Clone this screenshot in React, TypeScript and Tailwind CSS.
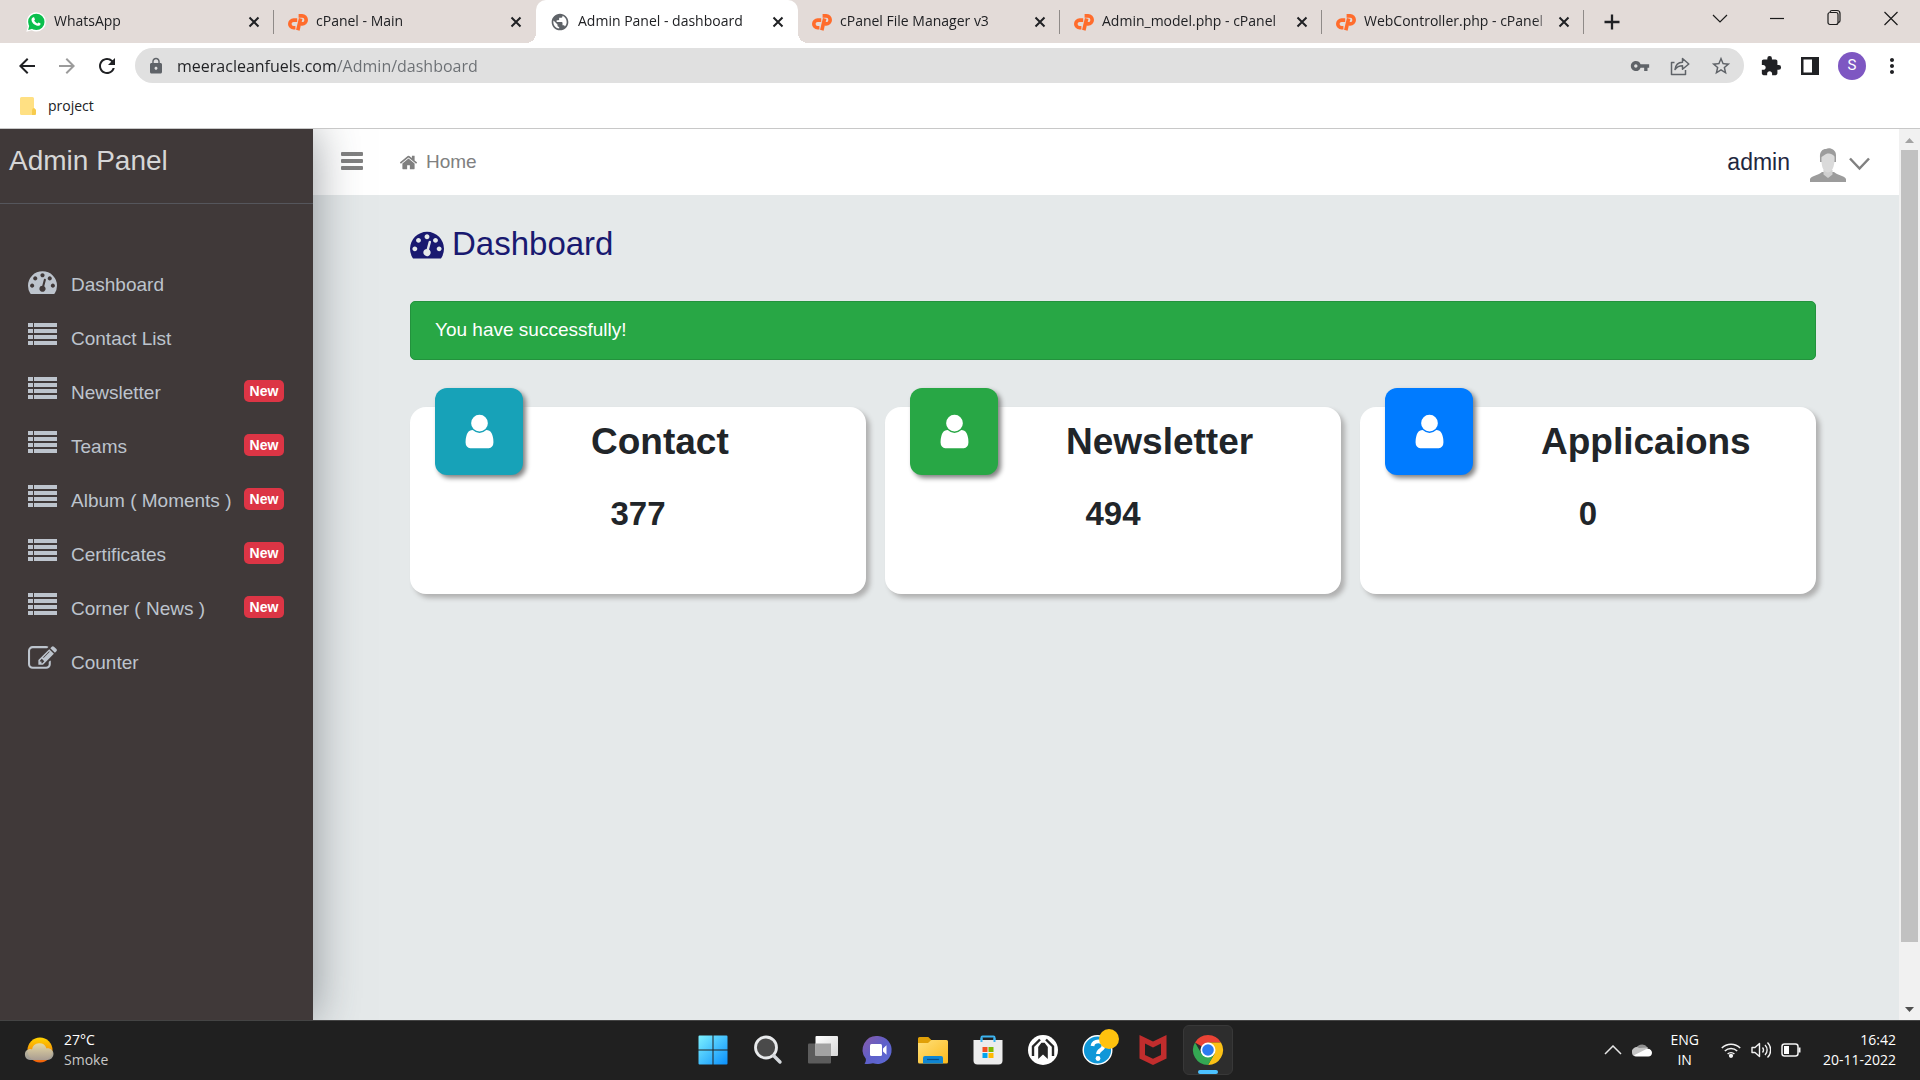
import type { ReactNode } from "react";
import {
  MdArrowBack,
  MdArrowForward,
  MdExtension,
  MdLock,
  MdMoreVert,
  MdPublic,
  MdRefresh,
  MdStarBorder,
  MdVpnKey,
} from "react-icons/md";

const TACHOMETER =
  "M384 1152q0-53-37.5-90.5t-90.5-37.5-90.5 37.5-37.5 90.5 37.5 90.5 90.5 37.5 90.5-37.5 37.5-90.5zm192-448q0-53-37.5-90.5t-90.5-37.5-90.5 37.5-37.5 90.5 37.5 90.5 90.5 37.5 90.5-37.5 37.5-90.5zm428 481l101-382q6-26-7.5-48.5t-38.5-29.5-48 6.5-30 39.5l-101 382q-60 5-107 43.5t-63 98.5q-20 77 20 146t117 89 146-20 89-117q16-60-6-117t-72-91zm660-33q0-53-37.5-90.5t-90.5-37.5-90.5 37.5-37.5 90.5 37.5 90.5 90.5 37.5 90.5-37.5 37.5-90.5zm-640-640q0-53-37.5-90.5t-90.5-37.5-90.5 37.5-37.5 90.5 37.5 90.5 90.5 37.5 90.5-37.5 37.5-90.5zm448 192q0-53-37.5-90.5t-90.5-37.5-90.5 37.5-37.5 90.5 37.5 90.5 90.5 37.5 90.5-37.5 37.5-90.5zm320 448q0 261-141 483-19 29-54 29h-1402q-35 0-54-29-141-221-141-483 0-182 71-348t191-286 286-191 348-71 348 71 286 191 191 286 71 348z";
const PENCIL =
  "M888 1184l116-116-152-152-116 116v56h96v96h56zm440-720q-16-16-33 1l-350 350q-17 17-1 33t33-1l350-350q17-17 1-33zm80 594v190q0 119-84.5 203.5t-203.5 84.5h-832q-119 0-203.5-84.5t-84.5-203.5v-832q0-119 84.5-203.5t203.5-84.5h832q63 0 117 25 15 7 18 23 3 17-9 29l-49 49q-14 14-32 8-23-6-45-6h-832q-66 0-113 47t-47 113v832q0 66 47 113t113 47h832q66 0 113-47t47-113v-126q0-13 9-22l64-64q15-15 35-7t20 29zm-96-738l288 288-672 672h-288v-288zm444 132l-92 92-288-288 92-92q28-28 68-28t68 28l152 152q28 28 28 68t-28 68z";
const USER =
  "M1536 1399q0 109-62.5 187t-150.5 78h-854q-88 0-150.5-78t-62.5-187q0-85 8.5-160.5t31.5-152 58.5-131 94-89 134.5-34.5q131 128 313 128t313-128q76 0 134.5 34.5t94 89 58.5 131 31.5 152 8.5 160.5zm-256-887q0 159-112.5 271.5t-271.5 112.5-271.5-112.5-112.5-271.5 112.5-271.5 271.5-112.5 271.5 112.5 112.5 271.5z";
const HOME =
  "M1472 992v480q0 26-19 45t-45 19h-384v-384h-256v384h-384q-26 0-45-19t-19-45v-480q0-1 .5-3t.5-3l575-474 575 474q1 2 1 6zm223-69l-62 74q-8 9-21 11h-3q-13 0-21-7l-692-577-692 577q-12 8-24 7-13-2-21-11l-62-74q-8-10-7-23.5t11-21.5l719-599q32-26 76-26t76 26l244 204v-195q0-14 9-23t23-9h192q14 0 23 9t9 23v408l219 182q10 8 11 21.5t-7 23.5z";

function Glyph({ d, className }: { d: string; className: string }) {
  return (
    <svg viewBox="0 0 1792 1792" fill="currentColor" className={className} aria-hidden="true">
      <path d={d} />
    </svg>
  );
}

function ListGlyph({ className }: { className: string }) {
  return (
    <svg viewBox="0 0 29 29" fill="currentColor" className={className} aria-hidden="true">
      {[3, 9, 15, 21].map((y) => (
        <g key={y}>
          <rect x="0" y={y} width="5" height="4" />
          <rect x="6" y={y} width="23" height="4" />
        </g>
      ))}
    </svg>
  );
}

function CloseMark() {
  return (
    <svg viewBox="0 0 12 12" className="size-3" stroke="#202124" strokeWidth="2" aria-hidden="true">
      <path d="M1.5 1.5l9 9M10.5 1.5l-9 9" />
    </svg>
  );
}

function WhatsAppMark() {
  return (
    <svg viewBox="0 0 20 20" className="size-5" aria-hidden="true">
      <path d="M10.3 .3a9.6 9.6 0 0 1 0 19.2c-1.7 0-3.2-.4-4.5-1.2L.3 19.8l1.5-5.3A9.6 9.6 0 0 1 10.3.3z" fill="#fff" />
      <circle cx="10.3" cy="9.9" r="8.2" fill="#0abf4c" />
      <path d="M2.2 17.9l1.1-4.5 3.2 3.3z" fill="#0abf4c" />
      <path
        d="M7.200 5.300c.3-.2.900-.1 1 .2l.7 1.700c.1.300 0 .5-.7 1.300.8 1.500 1.800 2.400 3.300 3 .3-.3.700-1 1-1 .5.200 1.900.7 2 1 .2.700-.3 1.900-1.400 2.200-1 .4-2.700.1-4.600-1.200-1.500-1-3-3-3-4.600 0-1.200.7-2.100 1.700-2.600z"
        fill="#fff"
      />
    </svg>
  );
}

function CpanelMark() {
  return (
    <svg viewBox="0 0 20 18" className="h-[18px] w-5" fill="none" stroke="#ff6c2c" strokeWidth="3.6" strokeLinejoin="round" aria-hidden="true">
      <path d="M9.200 7.100H5.600a3.800 3.800 0 0 0 0 7.600H7.400" />
      <path d="M9.800 17.200L12.700 5.500" />
      <path d="M10.600 2.900H14.200a4 4 0 0 1 0 8H12.600" />
    </svg>
  );
}

type Tab = { title: string; icon: ReactNode; active?: boolean; divider?: boolean };

const tabs: Tab[] = [
  { title: "WhatsApp", icon: <WhatsAppMark />, divider: true },
  { title: "cPanel - Main", icon: <CpanelMark /> },
  { title: "Admin Panel - dashboard", icon: <MdPublic className="size-5 text-[#5f6368]" />, active: true },
  { title: "cPanel File Manager v3", icon: <CpanelMark />, divider: true },
  { title: "Admin_model.php - cPanel", icon: <CpanelMark />, divider: true },
  { title: "WebController.php - cPanel", icon: <CpanelMark />, divider: true },
];

function BrowserTab({ tab }: { tab: Tab }) {
  return (
    <div
      className={
        tab.active
          ? "relative flex h-full min-w-0 basis-[262px] items-center rounded-t-[10px] bg-white px-3.5"
          : "relative flex h-full min-w-0 basis-[262px] items-center px-3.5"
      }
    >
      {tab.active && (
        <>
          <span className="absolute bottom-0 -left-2.5 size-2.5 bg-[radial-gradient(circle_at_0_0,transparent_10px,#fff_10px)]" />
          <span className="absolute -right-2.5 bottom-0 size-2.5 bg-[radial-gradient(circle_at_100%_0,transparent_10px,#fff_10px)]" />
        </>
      )}
      <button type="button" className="flex min-w-0 flex-1 items-center gap-2 text-left">
        <span className="shrink-0">{tab.icon}</span>
        <span className="mb-0.5 flex-1 overflow-hidden text-sm whitespace-nowrap text-[#202124] [mask-image:linear-gradient(90deg,#000_92%,transparent)]">
          {tab.title}
        </span>
      </button>
      <button type="button" aria-label={"Close " + tab.title} className="ml-2 shrink-0">
        <CloseMark />
      </button>
      {tab.divider && <span className="absolute top-2.5 right-0 h-6 w-px bg-[#8f8a88]" />}
    </div>
  );
}

function BrowserChrome() {
  return (
    <header className="shrink-0 border-b border-[#c8c8c8] bg-white">
      <div className="flex h-[43px] items-center bg-[#e3dbd8] pr-px pl-3">
        {tabs.map((t) => (
          <BrowserTab key={t.title} tab={t} />
        ))}
        <button type="button" aria-label="New tab" className="ml-5 shrink-0">
          <svg viewBox="0 0 16 16" className="size-4" stroke="#202124" strokeWidth="2.3" aria-hidden="true">
            <path d="M8 .5v15M.5 8h15" />
          </svg>
        </button>
        <div className="mb-1.5 ml-auto flex shrink-0 text-[#1b1b1b]">
          {[
            ["Search tabs", "M3 6l7 7 7-7"],
            ["Minimize", "M3 9.500h14"],
            ["Restore", "M4 5.500a2 2 0 0 1 2-2h6a2 2 0 0 1 2 2v8a2 2 0 0 1-2 2H6a2 2 0 0 1-2-2zM6 3a2 2 0 0 1 2-1.500h5a3 3 0 0 1 3 3v7a2 2 0 0 1-1.500 2"],
            ["Close", "M3.500 3l13 13M16.500 3l-13 13"],
          ].map(([label, d]) => (
            <button key={label} type="button" aria-label={label} className="flex w-[57px] justify-center">
              <svg viewBox="0 0 20 20" className="size-5" fill="none" stroke="currentColor" strokeWidth="1.2" aria-hidden="true">
                <path d={d} />
              </svg>
            </button>
          ))}
        </div>
      </div>

      <div className="flex h-[45px] items-center pr-4 pl-[15px] text-[#202124]">
        <button type="button" aria-label="Back"><MdArrowBack className="size-6" /></button>
        <button type="button" aria-label="Forward" className="ml-4 text-[#9b9b9b]"><MdArrowForward className="size-6" /></button>
        <button type="button" aria-label="Reload" className="ml-4"><MdRefresh className="size-6" /></button>
        <div className="ml-4 flex h-[35px] flex-1 items-center rounded-full bg-[#e0e0e0] px-3 text-[#5f6368]">
          <MdLock className="size-[18px]" aria-hidden="true" />
          <input
            type="text"
            aria-label="Address"
            defaultValue="meeracleanfuels.com/Admin/dashboard"
            className="ml-3 min-w-0 flex-1 bg-[linear-gradient(90deg,#202124_159px,#6b6f73_159px)] bg-clip-text text-base leading-6 text-transparent outline-none"
          />
          <div className="flex items-center gap-5">
            <button type="button" aria-label="Passwords"><MdVpnKey className="size-5" /></button>
            <button type="button" aria-label="Share">
              <svg viewBox="0 0 20 20" className="size-5" fill="none" stroke="currentColor" strokeWidth="1.5" aria-hidden="true">
                <path d="M4.500 6.500H1.500v12h14v-4.500M5 13.500c.6-4.500 3-7 7.500-7.200V2.500L18.800 8l-6.300 5.300V9.700C9 9.700 7 10.700 5 13.500z" strokeLinejoin="round" />
              </svg>
            </button>
            <button type="button" aria-label="Bookmark this page"><MdStarBorder className="size-[22px]" /></button>
          </div>
        </div>
        <div className="ml-4 flex items-center gap-[18px]">
          <button type="button" aria-label="Extensions"><MdExtension className="size-[22px]" /></button>
          <button type="button" aria-label="Side panel">
            <svg viewBox="0 0 18 18" className="mx-px size-[18px]" aria-hidden="true">
              <path d="M0 0h18v18H0zM2.500 2.500v13H11v-13z" fill="currentColor" fillRule="evenodd" />
            </svg>
          </button>
          <button type="button" aria-label="Profile" className="flex size-7 items-center justify-center rounded-full bg-[#7e57c2] font-['Roboto',sans-serif] text-[15px] text-white">
            S
          </button>
          <button type="button" aria-label="Menu" className="-ml-1"><MdMoreVert className="size-6" /></button>
        </div>
      </div>

      <div className="flex h-10 items-center pb-1 pl-5">
        <button type="button" className="flex items-center gap-3 text-sm text-[#202124]">
          <svg viewBox="0 0 16 18" className="h-[18px] w-4" aria-hidden="true">
            <path d="M1.500 0h11A1.500 1.500 0 0 1 14 1.500V11l2 2v3.500a1.500 1.500 0 0 1-1.500 1.500h-13A1.500 1.500 0 0 1 0 16.500v-15A1.500 1.500 0 0 1 1.500 0z" fill="#ffe083" />
            <path d="M14 11l2 2v3.500a1.500 1.500 0 0 1-1.500 1.500H12v-4.500a2.500 2.500 0 0 1 2-2.500z" fill="#f7cb4d" />
          </svg>
          project
        </button>
      </div>
    </header>
  );
}

const menu = [
  { label: "Dashboard", icon: "tach", badge: false },
  { label: "Contact List", icon: "list", badge: false },
  { label: "Newsletter", icon: "list", badge: true },
  { label: "Teams", icon: "list", badge: true },
  { label: "Album ( Moments )", icon: "list", badge: true },
  { label: "Certificates", icon: "list", badge: true },
  { label: "Corner ( News )", icon: "list", badge: true },
  { label: "Counter", icon: "pencil", badge: false },
];

function Sidebar() {
  return (
    <aside className="relative z-10 w-[313px] shrink-0 bg-[#403939] shadow-[0_0_44px_rgba(49,57,66,0.5)]">
      <div className="h-[75px] border-b border-[#55565c] pt-3.5 pl-[9px]">
        <a href="#" className="text-[28px] leading-9 text-[#d6d6d6]">Admin Panel</a>
      </div>
      <nav className="pt-[54px]">
        <ul>
          {menu.map((m) => (
            <li key={m.label}>
              <a href="#" className="flex h-[54px] items-center pr-[29px] pl-7 text-[19px] text-[#bdc4cd]">
                {m.icon === "list" && <ListGlyph className="mb-2.5 size-[29px]" />}
                {m.icon === "tach" && <Glyph d={TACHOMETER} className="mb-2 size-[29px]" />}
                {m.icon === "pencil" && <Glyph d={PENCIL} className="mb-2.5 size-[29px]" />}
                <span className="ml-3.5 flex-1 whitespace-nowrap">{m.label}</span>
                {m.badge && (
                  <span className="mb-1 flex h-[22px] w-10 items-center justify-center rounded-[5px] bg-[#dc3545] text-sm font-bold text-white">
                    New
                  </span>
                )}
              </a>
            </li>
          ))}
        </ul>
      </nav>
    </aside>
  );
}

function TopBar() {
  return (
    <div className="flex h-[66px] items-center bg-white pr-[29px] pl-7 text-[#808080]">
      <button type="button" aria-label="Toggle menu" className="mb-0.5">
        <svg viewBox="0 0 22 18" className="h-[18px] w-[22px]" fill="currentColor" aria-hidden="true">
          <rect width="22" height="4" rx="1" />
          <rect y="7" width="22" height="4" rx="1" />
          <rect y="14" width="22" height="4" rx="1" />
        </svg>
      </button>
      <a href="#" className="ml-9 flex items-center gap-2 text-[19px]">
        <Glyph d={HOME} className="size-[19px]" />
        Home
      </a>
      <button type="button" className="ml-auto flex items-center text-[23px] text-[#1f2740]">
        admin
        <svg viewBox="0 0 36 34" className="mt-1.5 ml-5 h-[34px] w-9" aria-hidden="true">
          <path d="M0 34v-3c1-3 9-4 12-7h12c3 3 11 4 12 7v3z" fill="#9c9c9c" />
          <path d="M13.500 22h9v4.500L18 30l-4.500-3.500z" fill="#d0d0d0" />
          <path d="M10 10C9.500 4 12 1 16 1c3-2 10 0 10 6v7H10z" fill="#9c9c9c" />
          <path d="M11.500 9c2-1 4-3.500 6-3.500S23 6 24.500 8.500c.5 6-1 16-6.500 16S11 16 11.500 9z" fill="#dadada" />
        </svg>
        <svg viewBox="0 0 21 14" className="mt-1 ml-[3px] h-3.5 w-[21px]" fill="none" stroke="#808080" strokeWidth="2.5" aria-hidden="true">
          <path d="M1 1.500l9.500 10 9.500-10" />
        </svg>
      </button>
    </div>
  );
}

function StatCard({ title, value, tile }: { title: string; value: number; tile: string }) {
  return (
    <section className="relative h-[187px] flex-1 rounded-2xl bg-white shadow-[4px_4px_5px_#b0b0b0]">
      <div className={tile}>
        <Glyph d={USER} className="size-[39px]" />
      </div>
      <h3 className="pt-3 pl-[181px] text-[37px] leading-[45px] font-bold">{title}</h3>
      <p className="pt-[30px] text-center text-[33px] leading-10 font-bold">{value}</p>
    </section>
  );
}

function Content() {
  return (
    <main className="flex-1 pt-[29px] pr-[83px] pl-[97px] text-[#212529]">
      <h1 className="flex items-center gap-2 text-[33px] leading-10 text-[#191970]">
        <Glyph d={TACHOMETER} className="size-[34px]" />
        Dashboard
      </h1>
      <div role="alert" className="mt-[37px] h-[59px] rounded-[5px] border border-[#23923d] bg-[#28a745] px-6 pt-3.5 text-[19px] leading-7 text-white">
        You have successfully!
      </div>
      <div className="mt-[47px] flex gap-[19px]">
        <StatCard title="Contact" value={377} tile="absolute -top-[19px] left-[25px] flex h-[87px] w-[88px] items-center justify-center rounded-xl bg-[#17a2b8] text-white shadow-[3px_3px_5px_#808080]" />
        <StatCard title="Newsletter" value={494} tile="absolute -top-[19px] left-[25px] flex h-[87px] w-[88px] items-center justify-center rounded-xl bg-[#28a745] text-white shadow-[3px_3px_5px_#808080]" />
        <StatCard title="Applicaions" value={0} tile="absolute -top-[19px] left-[25px] flex h-[87px] w-[88px] items-center justify-center rounded-xl bg-[#007bff] text-white shadow-[3px_3px_5px_#808080]" />
      </div>
    </main>
  );
}

function ScrollBar() {
  return (
    <div className="flex w-[21px] shrink-0 flex-col items-center bg-[#f1f1f1]" aria-hidden="true">
      <svg viewBox="0 0 21 21" className="size-[21px]"><path d="M6 14l4.500-5 4.500 5z" fill="#a3a3a3" /></svg>
      <div className="w-[17px] basis-[792px] bg-[#c1c1c1]" />
      <svg viewBox="0 0 21 21" className="mt-auto size-[21px]"><path d="M6 8l4.500 5L15 8z" fill="#505050" /></svg>
    </div>
  );
}

const apps: { name: string; art: ReactNode; active?: boolean }[] = [
  {
    name: "Start",
    art: (
      <>
        <defs>
          <linearGradient id="win" x1="0" y1="0" x2="1" y2="1">
            <stop offset="0" stopColor="#7df1ff" />
            <stop offset="1" stopColor="#0a8ffb" />
          </linearGradient>
        </defs>
        <path d="M1.500 .5H14.500v14H.5v-13a1 1 0 0 1 1-1zM15.500 .5h13a1 1 0 0 1 1 1v13h-14zM.5 15.500h14v14h-13a1 1 0 0 1-1-1zM15.500 15.500h14v13a1 1 0 0 1-1 1h-13z" fill="url(#win)" />
      </>
    ),
  },
  {
    name: "Search",
    art: (
      <>
        <circle cx="13" cy="12.500" r="10.500" fill="#4a4a4a" stroke="#e8eaec" strokeWidth="2.8" />
        <path d="M20.500 20.500l6.500 6.500" stroke="#d4d8dc" strokeWidth="3.4" strokeLinecap="round" />
      </>
    ),
  },
  {
    name: "Task view",
    art: (
      <>
        <defs>
          <linearGradient id="tv" x1="0" y1="0" x2="1" y2="1">
            <stop offset="0" stopColor="#fff" />
            <stop offset="1" stopColor="#d8d8d8" />
          </linearGradient>
        </defs>
        <rect x="0" y="8.500" width="23" height="20" rx="1" fill="#5c5c5c" />
        <rect x="7.500" y="1" width="22.500" height="20" rx="1" fill="url(#tv)" />
        <rect x="7.500" y="8.500" width="15.500" height="12.500" fill="#a3a3a3" />
      </>
    ),
  },
  {
    name: "Chat",
    art: (
      <>
        <defs>
          <linearGradient id="chat" x1="0" y1="0" x2="1" y2="1">
            <stop offset="0" stopColor="#8a5ba8" />
            <stop offset=".5" stopColor="#5f5fc9" />
            <stop offset="1" stopColor="#5b6bd6" />
          </linearGradient>
        </defs>
        <path d="M15 1a14 14 0 1 1-5 27.200c-2.500.8-5.500 1-8.500.6 1.300-1.800 1.600-3.300 1.300-5A14 14 0 0 1 15 1z" fill="url(#chat)" />
        <rect x="7" y="9" width="12" height="12" rx="1.500" fill="#fff" />
        <path d="M20 13.500l3.500-3.200v9.400L20 16.500z" fill="#fff" />
      </>
    ),
  },
  {
    name: "File Explorer",
    art: (
      <>
        <defs>
          <linearGradient id="fold" x1="0" y1="0" x2="1" y2="1">
            <stop offset="0" stopColor="#ffe07a" />
            <stop offset="1" stopColor="#fbb91c" />
          </linearGradient>
        </defs>
        <path d="M0 3.500A1.500 1.500 0 0 1 1.500 2h8.800l3 3H13v6H0z" fill="#e0a008" />
        <path d="M0 8h10l3.300-3H28.500A1.500 1.500 0 0 1 30 6.500V27a1.500 1.500 0 0 1-1.500 1.500h-27A1.500 1.500 0 0 1 0 27z" fill="url(#fold)" />
        <path d="M5 28.500V23a2 2 0 0 1 2-2h16a2 2 0 0 1 2 2v5.500z" fill="#0f86d3" />
        <path d="M9 24.500h12" stroke="#0a4e86" strokeWidth="1.2" />
      </>
    ),
  },
  {
    name: "Microsoft Store",
    art: (
      <>
        <path d="M8.500 8V2.500a1 1 0 0 1 1-1h11a1 1 0 0 1 1 1V8" fill="none" stroke="#3cb4f0" strokeWidth="2" />
        <path d="M.5 5h29v20.500a4 4 0 0 1-4 4h-21a4 4 0 0 1-4-4z" fill="#ececec" />
        <path d="M8.500 7V3M21.500 7V3" stroke="#3cb4f0" strokeWidth="2" />
        <rect x="9.500" y="12" width="5" height="5" fill="#f25022" />
        <rect x="15.500" y="12" width="5" height="5" fill="#7fba00" />
        <rect x="9.500" y="18" width="5" height="5" fill="#00a4ef" />
        <rect x="15.500" y="18" width="5" height="5" fill="#ffb900" />
      </>
    ),
  },
  {
    name: "Assistant",
    art: (
      <>
        <circle cx="15" cy="15" r="15" fill="#fff" />
        <path d="M10.200 24V12l3.200-4.200h3.200L19.800 12v12L15 19.500z" fill="#262626" />
        <path d="M5 21v-9.500L12 4.500M25 21v-9.500L18 4.500" fill="none" stroke="#262626" strokeWidth="2.4" />
      </>
    ),
  },
  {
    name: "Help",
    art: (
      <>
        <circle cx="14.500" cy="15" r="14.300" fill="#0f97d8" stroke="#fff" strokeWidth="1.4" />
        <path d="M9.500 11c.5-6 11-6 11-.2 0 4.200-5.500 3.700-5.500 8.200" fill="none" stroke="#fff" strokeWidth="3.8" />
        <circle cx="15" cy="23.500" r="2.400" fill="#fff" />
        <circle cx="26" cy="4" r="10" fill="#ffc20e" />
      </>
    ),
  },
  {
    name: "McAfee",
    art: <path d="M1.500 0L15 6.500 28.500 0v23.500L15 30 1.500 23.500zM7 8.500v11.500l8 3.800 8-3.800V8.500l-8 4z" fill="#c12d2d" fillRule="evenodd" />,
  },
  {
    name: "Google Chrome",
    active: true,
    art: (
      <>
        <path d="M15 15L2 7.500A15 15 0 0 1 28 7.500H15z" fill="#ea4335" />
        <path d="M15 7.500h13A15 15 0 0 1 15 30l6.500-11.200z" fill="#fbc116" />
        <path d="M2 7.500A15 15 0 0 0 15 30l6.500-11.200-13 0z" fill="#34a853" />
        <circle cx="15" cy="15" r="7.500" fill="#fff" />
        <circle cx="15" cy="15" r="5.800" fill="#2b7bf0" />
      </>
    ),
  },
];

function TaskBar() {
  return (
    <footer className="grid h-[60px] shrink-0 grid-cols-[1fr_auto_1fr] items-center border-t border-[#444] bg-[#202020] pb-0.5 text-sm leading-5 text-white">
      <button type="button" className="flex items-center gap-2.5 justify-self-start pl-6 text-left">
        <svg viewBox="0 0 30 28" className="h-7 w-[30px]" aria-hidden="true">
          <defs>
            <linearGradient id="sun" x1="0" y1="0" x2="0" y2="1">
              <stop offset="0" stopColor="#ffd400" />
              <stop offset="1" stopColor="#f2600c" />
            </linearGradient>
            <linearGradient id="haze" x1="0" y1="0" x2="0" y2="1">
              <stop offset="0" stopColor="#e6dcae" />
              <stop offset="1" stopColor="#a3a09c" />
            </linearGradient>
          </defs>
          <circle cx="16" cy="14" r="12.500" fill="url(#sun)" />
          <path d="M6 24a5.500 5.500 0 0 1-1-10.800c1-.3 2-.2 3 .2a7.500 7.500 0 0 1 14.500-1c4-.5 7 2.300 7 5.600a6 6 0 0 1-6 6z" fill="url(#haze)" opacity=".93" />
        </svg>
        <span>
          27°C
          <br />
          <span className="text-[#c8c8c8]">Smoke</span>
        </span>
      </button>

      <div className="flex gap-[5px]">
        {apps.map((a) => (
          <button
            key={a.name}
            type="button"
            aria-label={a.name}
            className={
              a.active
                ? "relative flex size-[50px] items-center justify-center rounded-md border border-[#383838] bg-[#2d2d2d]"
                : "relative flex size-[50px] items-center justify-center"
            }
          >
            <svg viewBox="0 0 30 30" className="size-[30px] overflow-visible" aria-hidden="true">
              {a.art}
            </svg>
            {a.active && <span className="absolute bottom-0 h-1 w-5 rounded-full bg-[#4cc2ff]" />}
          </button>
        ))}
      </div>

      <div className="flex items-center justify-self-end pr-6">
        <button type="button" aria-label="Show hidden icons">
          <svg viewBox="0 0 18 10" className="h-2.5 w-[18px]" fill="none" stroke="#e6e6e6" strokeWidth="1.5" aria-hidden="true">
            <path d="M1 9l8-8 8 8" />
          </svg>
        </button>
        <svg viewBox="0 0 20 14" className="ml-2.5 h-3.5 w-5" aria-hidden="true">
          <path d="M3.500 8a6.500 6.500 0 0 1 12-3.500L9 9z" fill="#8f8f8f" />
          <path d="M0 9.500A4.500 4.500 0 0 1 7 5l9-.5c.5 1-5 5-12.500 9A4 4 0 0 1 0 9.500z" fill="#c4c4c4" />
          <path d="M2 12.300L14.500 6c3-.8 5.500 1.300 5.500 3.800A3.800 3.800 0 0 1 16.200 13.500H4.500c-1 0-2-.5-2.500-1.200z" fill="#fff" />
        </svg>
        <button type="button" className="ml-[18px] text-center">
          ENG
          <br />
          IN
        </button>
        <button type="button" aria-label="Network, volume and battery" className="ml-[22px] flex items-center gap-2.5">
          <svg viewBox="0 0 20 16" className="h-4 w-5" fill="none" stroke="#f2f2f2" strokeWidth="1.5" aria-hidden="true">
            <path d="M.8 6a13 13 0 0 1 18.400 0M3.800 9a9 9 0 0 1 12.400 0M6.600 12a5 5 0 0 1 6.800 0" />
            <circle cx="10" cy="13.800" r="1.400" fill="#fff" />
          </svg>
          <svg viewBox="0 0 20 18" className="h-[18px] w-5" fill="none" stroke="#f2f2f2" strokeWidth="1.4" strokeLinejoin="round" aria-hidden="true">
            <path d="M1 6.500h3l4.500-4v13L4 11.500H1zM11.500 6.500a4 4 0 0 1 0 5M14 4a7 7 0 0 1 0 10M16.500 1.500a10.500 10.500 0 0 1 0 15" />
          </svg>
          <svg viewBox="0 0 20 14" className="h-3.5 w-5" fill="none" stroke="#f2f2f2" strokeWidth="1.5" aria-hidden="true">
            <rect x="1" y="1" width="16" height="12" rx="2.500" />
            <rect x="3" y="3" width="5" height="8" fill="#fff" stroke="none" />
            <path d="M18.500 4.500v5" strokeWidth="2" />
          </svg>
        </button>
        <button type="button" className="ml-[22px] text-right">
          16:42
          <br />
          20-11-2022
        </button>
      </div>
    </footer>
  );
}

export default function App() {
  return (
    <div className="flex h-screen flex-col overflow-hidden font-['Open_Sans','Noto_Sans',sans-serif]">
      <BrowserChrome />
      <div className="relative flex min-h-0 flex-1 overflow-hidden bg-[#e5e9ea] font-['Liberation_Sans',Arial,sans-serif]">
        <Sidebar />
        <div className="flex min-w-0 flex-1 flex-col">
          <TopBar />
          <Content />
        </div>
        <ScrollBar />
      </div>
      <TaskBar />
    </div>
  );
}
